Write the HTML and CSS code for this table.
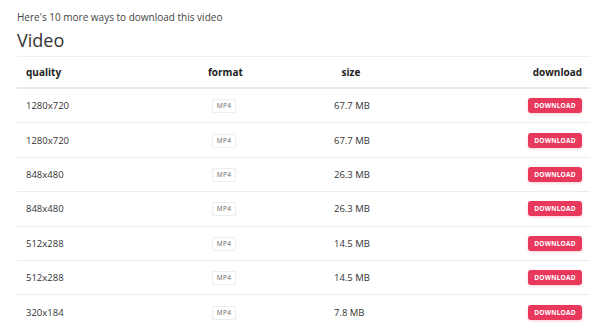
FILE: index.html
```html
<!DOCTYPE html>
<html>
<head>
<meta charset="utf-8">
<link rel="stylesheet" href="styles.css">
</head>
<body>
<div class="wrap">
  <p class="intro">Here's 10 more ways to download this video</p>
  <h2 class="title">Video</h2>
  <div class="table">
    <div class="row head">
      <div class="c q">quality</div>
      <div class="c f">format</div>
      <div class="c s">size</div>
      <div class="c d">download</div>
    </div>
    <div class="row">
      <div class="c q">1280x720</div>
      <div class="c f"><span class="badge">MP4</span></div>
      <div class="c s">67.7 MB</div>
      <div class="c d"><span class="btn">DOWNLOAD</span></div>
    </div>
    <div class="row">
      <div class="c q">1280x720</div>
      <div class="c f"><span class="badge">MP4</span></div>
      <div class="c s">67.7 MB</div>
      <div class="c d"><span class="btn">DOWNLOAD</span></div>
    </div>
    <div class="row">
      <div class="c q">848x480</div>
      <div class="c f"><span class="badge">MP4</span></div>
      <div class="c s">26.3 MB</div>
      <div class="c d"><span class="btn">DOWNLOAD</span></div>
    </div>
    <div class="row">
      <div class="c q">848x480</div>
      <div class="c f"><span class="badge">MP4</span></div>
      <div class="c s">26.3 MB</div>
      <div class="c d"><span class="btn">DOWNLOAD</span></div>
    </div>
    <div class="row">
      <div class="c q">512x288</div>
      <div class="c f"><span class="badge">MP4</span></div>
      <div class="c s">14.5 MB</div>
      <div class="c d"><span class="btn">DOWNLOAD</span></div>
    </div>
    <div class="row">
      <div class="c q">512x288</div>
      <div class="c f"><span class="badge">MP4</span></div>
      <div class="c s">14.5 MB</div>
      <div class="c d"><span class="btn">DOWNLOAD</span></div>
    </div>
    <div class="row">
      <div class="c q">320x184</div>
      <div class="c f"><span class="badge">MP4</span></div>
      <div class="c s">7.8 MB</div>
      <div class="c d"><span class="btn">DOWNLOAD</span></div>
    </div>
  </div>
</div>
</body>
</html>
```

FILE: styles.css
```css
html, body {
  margin: 0;
  padding: 0;
  background: #fff;
}
body {
  font-family: "Open Sans", "Noto Sans", sans-serif;
  color: #333;
}
.wrap {
  width: 573px;
  padding: 10px 0 0 17px;
}
.intro {
  margin: 0;
  font-size: 10px;
  line-height: 14px;
  color: #444;
}
.title {
  margin: 3px 0 0;
  font-size: 18px;
  font-weight: 400;
  line-height: 26px;
  color: #333;
  height: 29px;
}
.table {
  border-top: 1px solid #efefef;
}
.row {
  display: grid;
  grid-template-columns: 182px 126px 34px 1fr;
  align-items: center;
  height: 33.4px;
  padding: 0 8px 0 9px;
  border-bottom: 1px solid #ececec;
  font-size: 9.5px;
}
.row.head {
  height: 30px;
  border-bottom: 2px solid #e9e9e9;
  font-weight: 700;
  font-size: 10px;
  color: #222;
}
.c.s { white-space: nowrap; }
.head .c.s { text-align: center; }
.c.d { text-align: right; }
.badge {
  display: inline-block;
  margin-left: 4px;
  width: 24px;
  height: 14px;
  box-sizing: border-box;
  border: 1px solid #eee;
  border-radius: 2px;
  font-size: 6.5px;
  line-height: 12px;
  text-align: center;
  color: #666;
  letter-spacing: 0.3px;
}
.btn {
  display: inline-block;
  width: 54px;
  height: 15px;
  background: #e8385c;
  color: #fff;
  border-radius: 3px;
  font-size: 6.5px;
  font-weight: 700;
  line-height: 15px;
  text-align: center;
  letter-spacing: 0.2px;
  box-shadow: 0 1px 3px rgba(232, 56, 92, 0.25);
}
```
